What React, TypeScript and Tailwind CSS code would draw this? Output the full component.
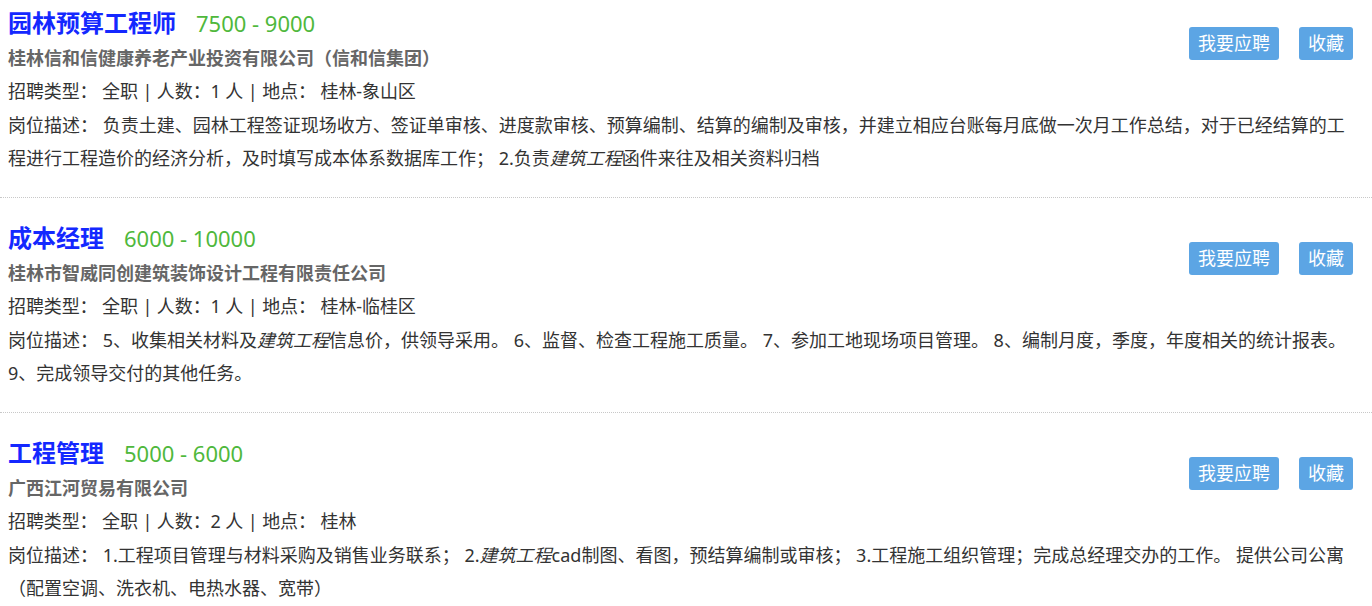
import React from "react";

type Job = {
  title: string;
  salary: string;
  company: string;
  count: string;
  place: string;
  desc: React.ReactNode;
};

const jobs: Job[] = [
  {
    title: "园林预算工程师",
    salary: "7500 - 9000",
    company: "桂林信和信健康养老产业投资有限公司（信和信集团）",
    count: "1",
    place: "桂林-象山区",
    desc: (
      <>
        负责土建、园林工程签证现场收方、签证单审核、进度款审核、预算编制、结算的编制及审核，并建立相应台账每月底做一次月工作总结，对于已经结算的工程进行工程造价的经济分析，及时填写成本体系数据库工作； 2.负责<em>建筑工程</em>函件来往及相关资料归档
      </>
    ),
  },
  {
    title: "成本经理",
    salary: "6000 - 10000",
    company: "桂林市智威同创建筑装饰设计工程有限责任公司",
    count: "1",
    place: "桂林-临桂区",
    desc: (
      <>
        5、收集相关材料及<em>建筑工程</em>信息价，供领导采用。 6、监督、检查工程施工质量。 7、参加工地现场项目管理。 8、编制月度，季度，年度相关的统计报表。 9、完成领导交付的其他任务。
      </>
    ),
  },
  {
    title: "工程管理",
    salary: "5000 - 6000",
    company: "广西江河贸易有限公司",
    count: "2",
    place: "桂林",
    desc: (
      <>
        1.工程项目管理与材料采购及销售业务联系； 2.<em>建筑工程</em>cad制图、看图，预结算编制或审核； 3.工程施工组织管理；完成总经理交办的工作。 提供公司公寓（配置空调、洗衣机、电热水器、宽带）
      </>
    ),
  },
];

export default function App() {
  return (
    <div
      className="w-[1372px] min-h-[606px] bg-white overflow-hidden text-[#333]"
      style={{ fontFamily: '"Noto Sans", "Noto Sans CJK SC", sans-serif' }}
    >
      {jobs.map((j, i) => (
        <div
          key={i}
          className={`${i === 0 ? "pt-[7px]" : "pt-[24px]"} pb-[22px] pl-[8px] pr-[18px] border-b border-dotted border-[#c8c8c8]`}
        >
          <div className="flex justify-between">
            <div>
              <div className="h-[35px] flex items-baseline whitespace-nowrap">
                <span className="text-[24px] leading-[31px] font-bold text-[#1428ff]">{j.title}</span>
                <span className="ml-[20px] text-[22px] leading-[31px] text-[#4fb83c]">{j.salary}</span>
              </div>
              <div className="text-[18px] leading-[33px] font-bold text-[#666]">{j.company}</div>
              <div className="text-[18px] leading-[33px] tracking-[-0.1px]">
                招聘类型： 全职 | 人数：{j.count} 人 | 地点： {j.place}
              </div>
            </div>
            <div className="flex gap-[20px] mt-[20px] mr-[1px] items-start">
              <button className="h-[33px] px-[9px] rounded-[3px] bg-[#5ca5e4] text-white text-[18px] leading-[33px]">
                我要应聘
              </button>
              <button className="h-[33px] px-[9px] rounded-[3px] bg-[#5ca5e4] text-white text-[18px] leading-[33px]">
                收藏
              </button>
            </div>
          </div>
          <div className="text-[18px] leading-[33px] mt-[1px]">
            岗位描述： {j.desc}
          </div>
        </div>
      ))}
    </div>
  );
}
